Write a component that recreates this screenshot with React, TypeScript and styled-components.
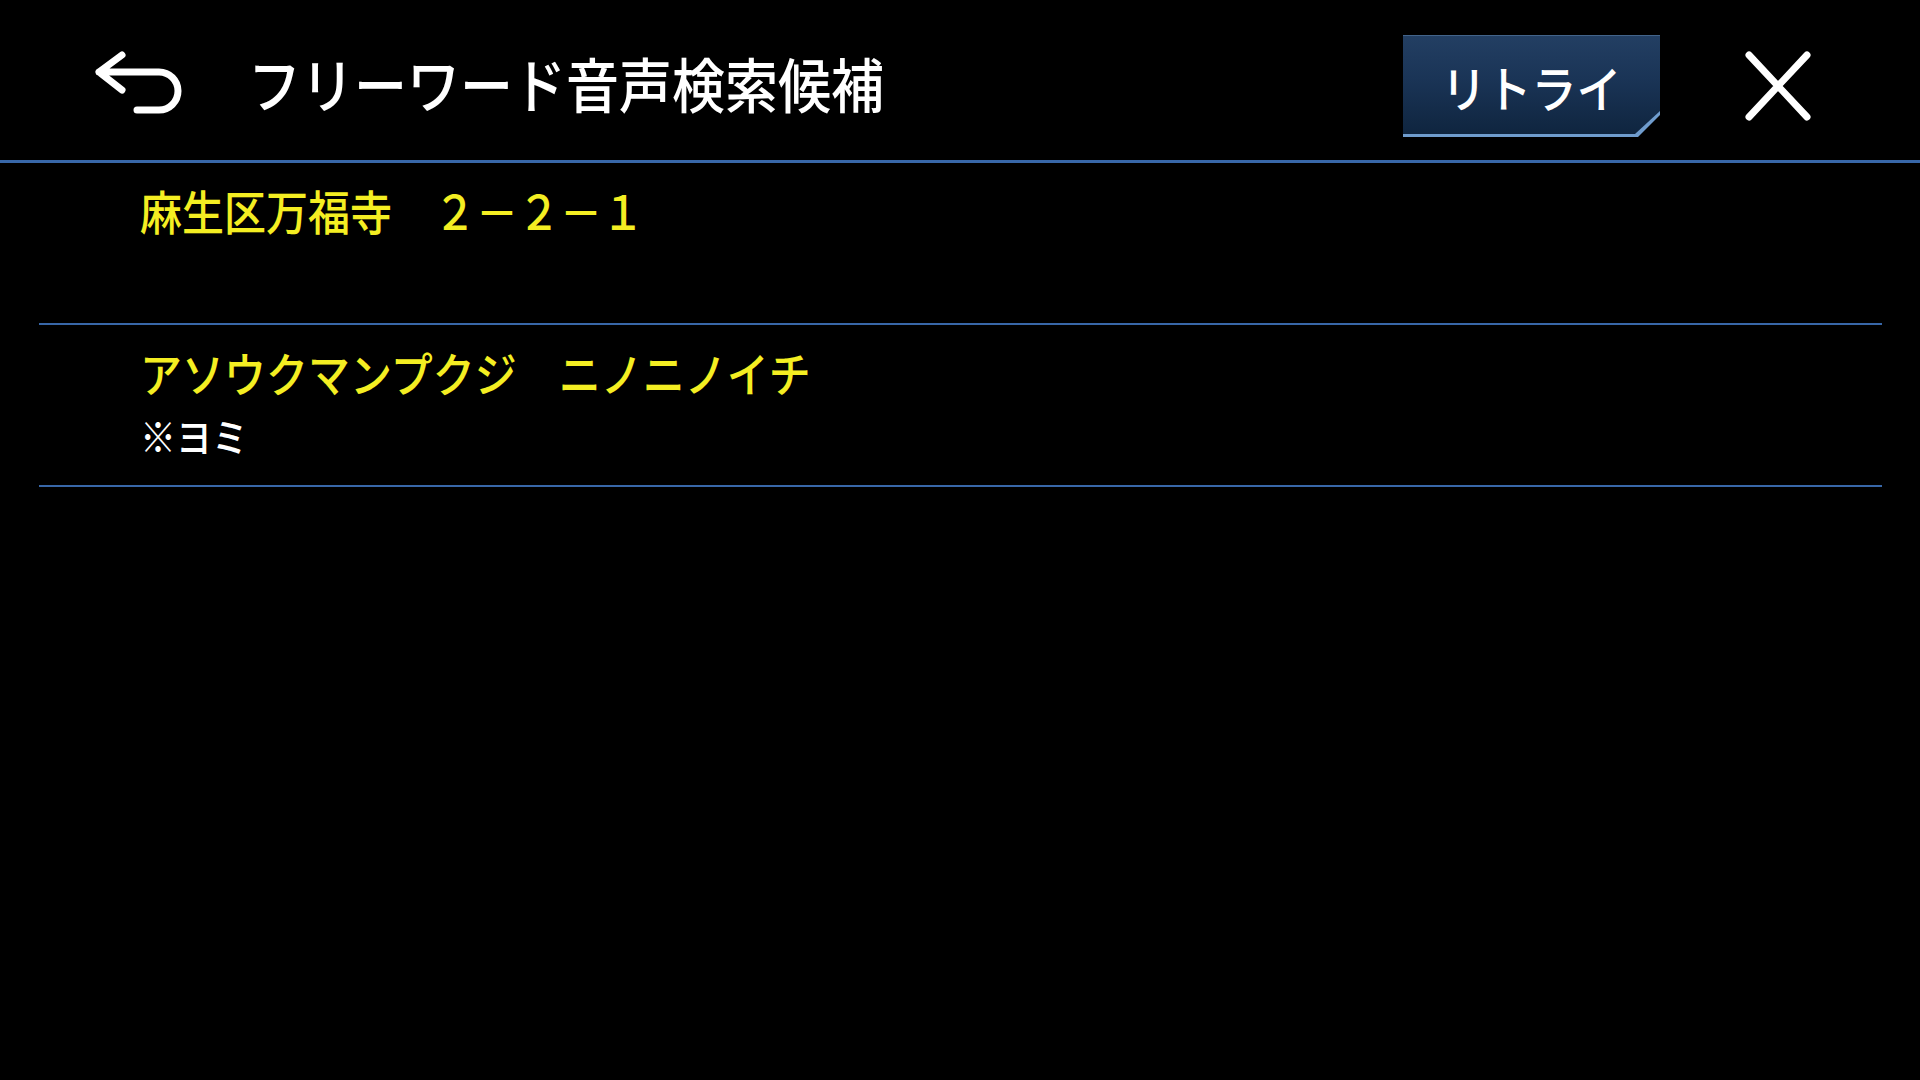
import styled, { createGlobalStyle } from 'styled-components'

const GlobalStyle = createGlobalStyle`
  html, body {
    margin: 0;
    padding: 0;
    background: #000;
  }
  body {
    font-family: "Noto Sans CJK JP", "Noto Sans", sans-serif;
    color: #fff;
  }
`

const Screen = styled.div`
  width: 1920px;
  height: 1080px;
  background: #000;
  overflow: hidden;
`

const Header = styled.div`
  display: flex;
  align-items: center;
  height: 148px;
  padding: 12px 108px 0 90px;
  border-bottom: 3px solid #3867a8;
`

const BackButton = styled.svg`
  flex: none;
  width: 100px;
  height: 75px;
`

const Title = styled.h1`
  flex: 1;
  margin: 0 0 7px 58px;
  font-size: 53px;
  font-weight: 500;
  line-height: 1;
  color: #fff;
  transform: scaleY(1.12);
  transform-origin: left center;
`

const RetryFrame = styled.div`
  flex: none;
  display: flex;
  width: 257px;
  height: 102px;
  padding-bottom: 3px;
  box-sizing: border-box;
  background: #6f9ccd;
  clip-path: polygon(0 0, 100% 0, 100% calc(100% - 22px), calc(100% - 22px) 100%, 0 100%);
  margin-right: 84px;
`

const RetryFace = styled.div`
  flex: 1;
  display: flex;
  align-items: center;
  justify-content: center;
  background: linear-gradient(180deg, #233f63 0%, #1a3456 45%, #0f253f 100%);
  box-shadow: inset 0 1px 0 #43648a;
  clip-path: polygon(0 0, 100% 0, 100% calc(100% - 23px), calc(100% - 25px) 100%, 0 100%);
  padding-top: 3px;
`

const RetryLabel = styled.span`
  font-size: 45px;
  font-weight: 500;
  color: #fff;
  transform: scaleY(1.1);
`

const CloseButton = styled.svg`
  flex: none;
  width: 68px;
  height: 72px;
`

const List = styled.div`
  margin: 0 38px 0 39px;
`

const Row = styled.div`
  padding: 22px 0 0 101px;
  height: 138px;
  border-bottom: 2px solid #3867a8;
  display: flex;
  flex-direction: column;
  gap: 16px;
`

const Name = styled.div`
  font-size: 42px;
  font-weight: 500;
  line-height: 50px;
  color: #f4ee22;
  white-space: pre;
  transform: scaleY(1.12);
  transform-origin: left center;
`

const Note = styled.div`
  font-size: 36px;
  font-weight: 500;
  line-height: 43px;
  color: #fff;
  transform: scaleY(1.1);
  transform-origin: left center;
`

const candidates = [
  { name: '麻生区万福寺　２－２－１' },
  { name: 'アソウクマンプクジ　ニノニノイチ', note: '※ヨミ' },
]

const App = () => {
  return (
    <>
      <GlobalStyle />
      <Screen>
        <Header>
          <BackButton viewBox="90 40 100 75">
            <path
              d="M122 46 L99 63 L122 81 M99 63 H159 A19 19 0 0 1 159 101 H137"
              fill="none"
              stroke="#fff"
              strokeWidth="7"
              strokeLinecap="round"
              strokeLinejoin="round"
            />
          </BackButton>
          <Title>フリーワード音声検索候補</Title>
          <RetryFrame>
            <RetryFace>
              <RetryLabel>リトライ</RetryLabel>
            </RetryFace>
          </RetryFrame>
          <CloseButton viewBox="0 0 68 72">
            <path
              d="M5 5 L63 67 M63 5 L5 67"
              fill="none"
              stroke="#fff"
              strokeWidth="7"
              strokeLinecap="round"
            />
          </CloseButton>
        </Header>
        <List>
          {candidates.map((c) => (
            <Row key={c.name}>
              <Name>{c.name}</Name>
              {c.note && <Note>{c.note}</Note>}
            </Row>
          ))}
        </List>
      </Screen>
    </>
  )
}

export default App
